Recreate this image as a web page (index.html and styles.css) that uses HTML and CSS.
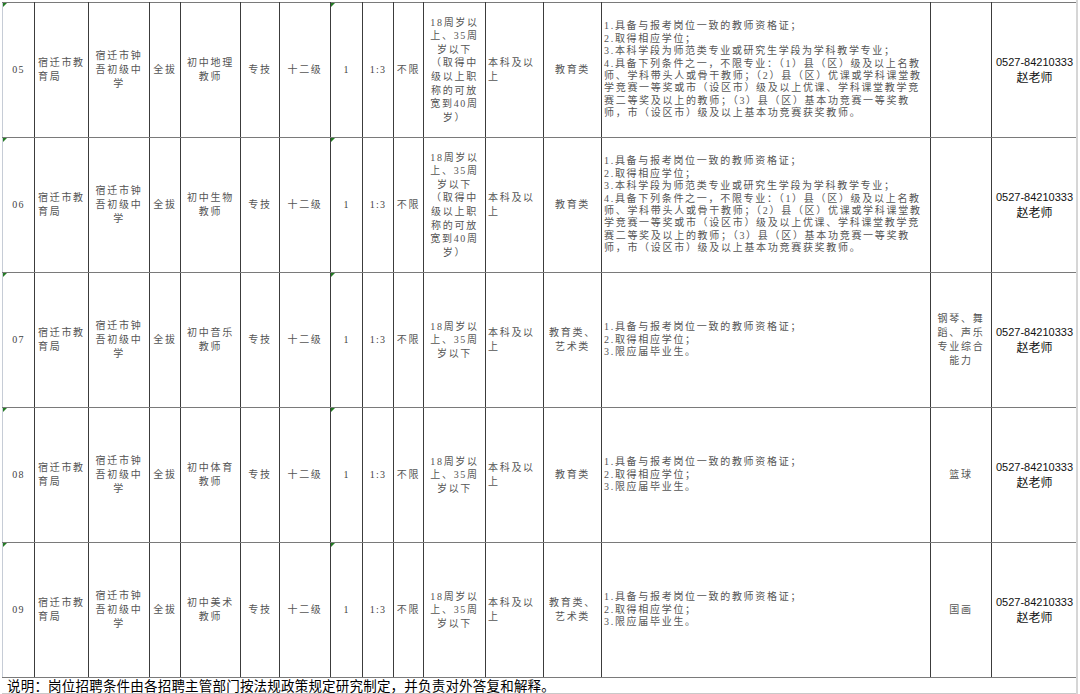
FILE: index.html
```html
<!DOCTYPE html>
<html lang="zh-CN">
<head>
<meta charset="utf-8">
<title>岗位表</title>
<link rel="stylesheet" href="styles.css">
</head>
<body>
<div class="sheet">
<table class="grid">
<colgroup>
<col class="w1"><col class="w2"><col class="w3"><col class="w4"><col class="w5"><col class="w6"><col class="w7"><col class="w8"><col class="w9"><col class="w10"><col class="w11"><col class="w12"><col class="w13"><col class="w14"><col class="w15"><col class="w16">
</colgroup>
<tbody>
<tr>
<td class="num mark first">05</td>
<td class="lft">宿迁市教<br>育局</td>
<td class="ctr">宿迁市钟<br>吾初级中<br>学</td>
<td class="ctr">全拔</td>
<td class="ctr">初中地理<br>教师</td>
<td class="ctr">专技</td>
<td class="ctr">十二级</td>
<td class="num mark">1</td>
<td class="num">1:3</td>
<td class="ctr">不限</td>
<td class="ctr age">18周岁以<br>上、35周<br>岁以下<br>（取得中<br>级以上职<br>称的可放<br>宽到40周<br>岁）</td>
<td class="lft edu">本科及以<br>上</td>
<td class="ctr">教育类</td>
<td class="req">1.具备与报考岗位一致的教师资格证；<br>2.取得相应学位；<br>3.本科学段为师范类专业或研究生学段为学科教学专业；<br>4.具备下列条件之一，不限专业：（1）县（区）级及以上名教<br>师、学科带头人或骨干教师；（2）县（区）优课或学科课堂教<br>学竞赛一等奖或市（设区市）级及以上优课、学科课堂教学竞<br>赛二等奖及以上的教师；（3）县（区）基本功竞赛一等奖教<br>师，市（设区市）级及以上基本功竞赛获奖教师。</td>
<td class="ctr"></td>
<td class="tel"><span class="phone">0527-84210333</span><br><span class="who">赵老师</span></td>
</tr>
<tr>
<td class="num mark first">06</td>
<td class="lft">宿迁市教<br>育局</td>
<td class="ctr">宿迁市钟<br>吾初级中<br>学</td>
<td class="ctr">全拔</td>
<td class="ctr">初中生物<br>教师</td>
<td class="ctr">专技</td>
<td class="ctr">十二级</td>
<td class="num mark">1</td>
<td class="num">1:3</td>
<td class="ctr">不限</td>
<td class="ctr age">18周岁以<br>上、35周<br>岁以下<br>（取得中<br>级以上职<br>称的可放<br>宽到40周<br>岁）</td>
<td class="lft edu">本科及以<br>上</td>
<td class="ctr">教育类</td>
<td class="req">1.具备与报考岗位一致的教师资格证；<br>2.取得相应学位；<br>3.本科学段为师范类专业或研究生学段为学科教学专业；<br>4.具备下列条件之一，不限专业：（1）县（区）级及以上名教<br>师、学科带头人或骨干教师；（2）县（区）优课或学科课堂教<br>学竞赛一等奖或市（设区市）级及以上优课、学科课堂教学竞<br>赛二等奖及以上的教师；（3）县（区）基本功竞赛一等奖教<br>师，市（设区市）级及以上基本功竞赛获奖教师。</td>
<td class="ctr"></td>
<td class="tel"><span class="phone">0527-84210333</span><br><span class="who">赵老师</span></td>
</tr>
<tr>
<td class="num mark first">07</td>
<td class="lft">宿迁市教<br>育局</td>
<td class="ctr">宿迁市钟<br>吾初级中<br>学</td>
<td class="ctr">全拔</td>
<td class="ctr">初中音乐<br>教师</td>
<td class="ctr">专技</td>
<td class="ctr">十二级</td>
<td class="num mark">1</td>
<td class="num">1:3</td>
<td class="ctr">不限</td>
<td class="ctr age">18周岁以<br>上、35周<br>岁以下</td>
<td class="lft edu">本科及以<br>上</td>
<td class="ctr">教育类、<br>艺术类</td>
<td class="req">1.具备与报考岗位一致的教师资格证；<br>2.取得相应学位；<br>3.限应届毕业生。</td>
<td class="ctr">钢琴、舞<br>蹈、声乐<br>专业综合<br>能力</td>
<td class="tel"><span class="phone">0527-84210333</span><br><span class="who">赵老师</span></td>
</tr>
<tr>
<td class="num mark first">08</td>
<td class="lft">宿迁市教<br>育局</td>
<td class="ctr">宿迁市钟<br>吾初级中<br>学</td>
<td class="ctr">全拔</td>
<td class="ctr">初中体育<br>教师</td>
<td class="ctr">专技</td>
<td class="ctr">十二级</td>
<td class="num mark">1</td>
<td class="num">1:3</td>
<td class="ctr">不限</td>
<td class="ctr age">18周岁以<br>上、35周<br>岁以下</td>
<td class="lft edu">本科及以<br>上</td>
<td class="ctr">教育类</td>
<td class="req">1.具备与报考岗位一致的教师资格证；<br>2.取得相应学位；<br>3.限应届毕业生。</td>
<td class="ctr">篮球</td>
<td class="tel"><span class="phone">0527-84210333</span><br><span class="who">赵老师</span></td>
</tr>
<tr>
<td class="num mark first">09</td>
<td class="lft">宿迁市教<br>育局</td>
<td class="ctr">宿迁市钟<br>吾初级中<br>学</td>
<td class="ctr">全拔</td>
<td class="ctr">初中美术<br>教师</td>
<td class="ctr">专技</td>
<td class="ctr">十二级</td>
<td class="num mark">1</td>
<td class="num">1:3</td>
<td class="ctr">不限</td>
<td class="ctr age">18周岁以<br>上、35周<br>岁以下</td>
<td class="lft edu">本科及以<br>上</td>
<td class="ctr">教育类、<br>艺术类</td>
<td class="req">1.具备与报考岗位一致的教师资格证；<br>2.取得相应学位；<br>3.限应届毕业生。</td>
<td class="ctr">国画</td>
<td class="tel"><span class="phone">0527-84210333</span><br><span class="who">赵老师</span></td>
</tr>
</tbody>
</table>
<div class="note">说明：岗位招聘条件由各招聘主管部门按法规政策规定研究制定，并负责对外答复和解释。</div>
</div>
</body>
</html>
```
FILE: styles.css
```css
html, body {
  margin: 0;
  padding: 0;
  background: #ffffff;
}

.sheet {
  width: 1078px;
  height: 694px;
  padding-top: 2px;
  padding-left: 2px;
  box-sizing: border-box;
  border-right: 2px solid #d6d6d6;
  overflow: hidden;
}

.grid {
  border-collapse: collapse;
  table-layout: fixed;
  width: 1076px;
  font-family: "Liberation Serif", "Noto Sans CJK SC", serif;
  font-size: 10px;
  color: #555555;
  letter-spacing: 1.7px;
}

.w1 { width: 32px; }
.w2 { width: 54px; }
.w3 { width: 61px; }
.w4 { width: 31px; }
.w5 { width: 60px; }
.w6 { width: 39px; }
.w7 { width: 51px; }
.w8 { width: 32px; }
.w9 { width: 31px; }
.w10 { width: 30px; }
.w11 { width: 62px; }
.w12 { width: 58px; }
.w13 { width: 58px; }
.w14 { width: 329px; }
.w15 { width: 61px; }
.w16 { width: 86px; }

.grid tr {
  height: 135px;
}

.grid td {
  border-left: 1px solid #3c3c3c;
  border-right: 1px solid #3c3c3c;
  border-top: 1px solid #7a7a7a;
  border-bottom: 1px solid #7a7a7a;
  padding: 0 1px;
  vertical-align: middle;
  line-height: 14px;
  white-space: nowrap;
  overflow: hidden;
}

.grid td.first {
  border-left: 1px solid #c6ccd6;
}

.mark {
  position: relative;
}

.mark::before {
  content: "";
  position: absolute;
  top: 0;
  left: 0;
  width: 0;
  height: 0;
  border-top: 4px solid #237a23;
  border-right: 4px solid transparent;
}

.num {
  text-align: center;
  letter-spacing: 1.2px;
  color: #3f3f3f;
}

.ctr {
  text-align: center;
}

.lft {
  text-align: left;
  padding-left: 3px !important;
}

.age {
  line-height: 13.6px !important;
}

.edu {
  padding-left: 2px !important;
}

.req {
  text-align: left;
  padding-left: 2px !important;
  line-height: 12.4px !important;
}

.tel {
  text-align: center;
  color: #111111;
  letter-spacing: 0;
  line-height: 14px !important;
}

.phone {
  font-family: "Liberation Sans", "Noto Sans CJK SC", sans-serif;
  font-size: 11px;
}

.who {
  font-family: "Noto Sans CJK SC", sans-serif;
  font-size: 12px;
}

.note {
  height: 15px;
  padding-left: 5px;
  font-family: "Noto Sans CJK SC", sans-serif;
  font-size: 13.5px;
  line-height: 15px;
  letter-spacing: 0.2px;
  color: #000000;
  border-bottom: 1px solid #c9c9c9;
  white-space: nowrap;
}
```
